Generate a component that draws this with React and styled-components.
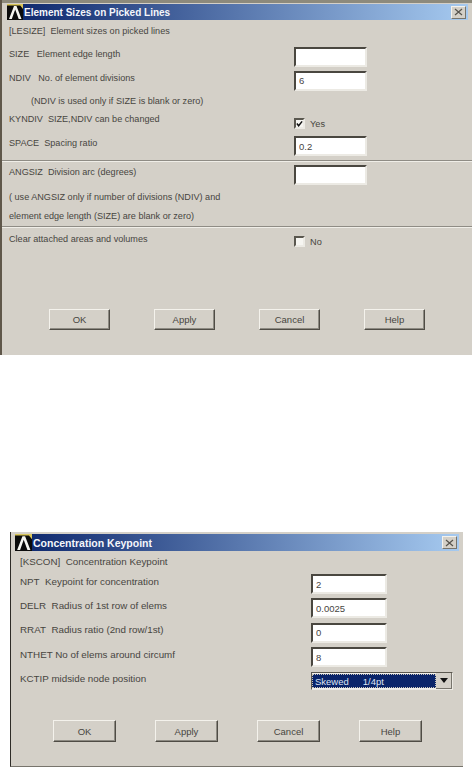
import React from "react";
import styled, { createGlobalStyle } from "styled-components";

const GlobalStyle = createGlobalStyle`
  html, body {
    margin: 0;
    padding: 0;
    background: #fff;
    width: 472px;
    height: 769px;
    overflow: hidden;
    font-family: "Liberation Sans", Arial, sans-serif;
  }
`;

const Page = styled.div`
  display: flex;
  flex-direction: column;
  width: 472px;
`;

const FirstDialog = styled.div`
  box-sizing: border-box;
  width: 472px;
  height: 355px;
  padding: 4px 4px 0 5px;
  background: #d4d0c8;
  border-left: 2px solid #5f574a;
  box-shadow: inset 0 3px 0 #8d8a7c;
`;

const SecondDialog = styled.div`
  box-sizing: border-box;
  width: 453px;
  height: 235px;
  margin: 177px 0 0 10px;
  padding: 2px 4px 0 4px;
  background: #d4d0c8;
  border-left: 1px solid #2e2c28;
  border-bottom: 1px solid #77746c;
`;

const TitleBar = styled.div`
  display: flex;
  align-items: center;
  height: ${(p) => p.$h}px;
  background: linear-gradient(90deg, #0a246a 0%, #a6caf0 100%);
  color: #f4f6fa;
  font-size: ${(p) => p.$size}px;
  font-weight: 700;
  padding-right: 2px;
`;

const TitleText = styled.span`
  flex: 1;
  margin-left: 1px;
  white-space: nowrap;
`;

const Close = styled.div`
  width: 15px;
  height: 13px;
  display: flex;
  align-items: center;
  justify-content: center;
  background: #d4d0c8;
  border: 1px solid;
  border-color: #f4f2ec #77746c #77746c #f4f2ec;
  box-sizing: border-box;
`;

const Row = styled.div`
  display: grid;
  grid-template-columns: ${(p) => p.$control}px 1fr;
  align-items: center;
  height: ${(p) => p.$h}px;
  color: #47453f;
  font-size: ${(p) => p.$size || 9.1}px;
  white-space: nowrap;
`;

const Label = styled.div`
  padding-left: ${(p) => p.$indent || 2}px;
  padding-bottom: ${(p) => p.$lift || 0}px;
`;

const Field = styled.input`
  box-sizing: border-box;
  display: block;
  width: ${(p) => p.$w}px;
  height: 20px;
  padding: 0 0 0 3px;
  margin: 0;
  outline: 0;
  background: #fff;
  border: 2px solid;
  border-color: #4a4740 #eceae4 #eceae4 #4a4740;
  color: #47453f;
  font: 9.5px "Liberation Sans", Arial, sans-serif;
`;

const CheckCell = styled.div`
  display: flex;
  align-items: center;
  gap: 5px;
  padding-top: 5px;
  font-size: 9.2px;
`;

const CheckBox = styled.div`
  box-sizing: border-box;
  width: 11px;
  height: 11px;
  display: flex;
  align-items: center;
  justify-content: center;
  background: #f6f5f1;
  border: 2px solid;
  border-color: #5a574f #eceae4 #eceae4 #5a574f;
`;

const Divider = styled.div`
  height: 1px;
  background: #8f8c85;
  border-bottom: 1px solid #f0eee8;
  margin: 0 -4px 0 -5px;
`;

const ButtonRow = styled.div`
  display: flex;
  gap: ${(p) => p.$gap}px;
  margin-top: ${(p) => p.$top}px;
  margin-left: ${(p) => p.$left}px;
`;

const Button = styled.button`
  box-sizing: border-box;
  width: ${(p) => p.$w}px;
  height: ${(p) => p.$h}px;
  padding: 0;
  background: #d4d0c8;
  border: 1px solid;
  border-color: #f4f2ec #4f4c45 #4f4c45 #f4f2ec;
  box-shadow: inset -1px -1px 0 #8d8a82;
  color: #47453f;
  font: 9.5px "Liberation Sans", Arial, sans-serif;
`;

const Select = styled.div`
  box-sizing: border-box;
  display: flex;
  width: 142px;
  height: 18px;
  background: #f2f0ec;
  border: 1px solid;
  border-color: #5a574f #eceae4 #eceae4 #5a574f;
`;

const SelectValue = styled.div`
  flex: 1;
  display: flex;
  align-items: center;
  gap: 14px;
  padding-left: 3px;
  margin: 1px 0;
  background: #0a246a;
  color: #dfe6f5;
  font-size: 9.5px;
  outline: 1px dotted #c9c5b8;
  outline-offset: -1px;
`;

const SelectArrow = styled.div`
  width: 15px;
  display: flex;
  align-items: center;
  justify-content: center;
  background: #d4d0c8;
  border-right: 1px solid #77746c;
  border-bottom: 1px solid #77746c;
`;

const AnsysLogo = ({ size }) => (
  <svg width={size} height={size} viewBox="0 0 16 16">
    <rect width="16" height="16" fill="#0b0b0b" />
    <path d="M0 0h16v1.5H0zM12 0h4v5z" fill="#d9c65a" />
    <path d="M2 15 L7 2 h2.5 L14.5 15 h-2.8 L8.2 5.5 L4.8 15z" fill="#f5f5f0" />
  </svg>
);

const CloseIcon = () => (
  <svg width="9" height="8" viewBox="0 0 9 8">
    <path d="M1 1l7 6M8 1L1 7" stroke="#55524c" strokeWidth="1.2" fill="none" />
  </svg>
);

const CheckMark = () => (
  <svg width="8" height="8" viewBox="0 0 8 8">
    <path d="M1 3.5l2 2.5 4-5" stroke="#111" strokeWidth="1.7" fill="none" />
  </svg>
);

const Title = ({ h, logo, size, children }) => (
  <TitleBar $h={h} $size={size}>
    <AnsysLogo size={logo} />
    <TitleText>{children}</TitleText>
    <Close>
      <CloseIcon />
    </Close>
  </TitleBar>
);

const Buttons = ({ w, h, gap, top, left }) => (
  <ButtonRow $gap={gap} $top={top} $left={left}>
    {["OK", "Apply", "Cancel", "Help"].map((name) => (
      <Button key={name} $w={w} $h={h}>
        {name}
      </Button>
    ))}
  </ButtonRow>
);

const FIRST_X = 287;
const SECOND_X = 296;
const SECOND_TEXT = 9.8;

const App = () => (
  <Page>
    <GlobalStyle />
    <FirstDialog>
      <Title h={16} logo={16} size={10}>Element Sizes on Picked Lines</Title>
      <Row $control={FIRST_X} $h={24}>
        <Label $lift={2}>[LESIZE]&nbsp; Element sizes on picked lines</Label>
      </Row>
      <Row $control={FIRST_X} $h={26}>
        <Label $lift={6}>SIZE&nbsp;&nbsp; Element edge length</Label>
        <Field $w={73} />
      </Row>
      <Row $control={FIRST_X} $h={21}>
        <Label $lift={6}>NDIV&nbsp;&nbsp; No. of element divisions</Label>
        <Field $w={73} defaultValue="6" />
      </Row>
      <Row $control={FIRST_X} $h={19}>
        <Label $indent={24}>(NDIV is used only if SIZE is blank or zero)</Label>
      </Row>
      <Row $control={FIRST_X} $h={22}>
        <Label $lift={4}>KYNDIV&nbsp; SIZE,NDIV can be changed</Label>
        <CheckCell>
          <CheckBox>
            <CheckMark />
          </CheckBox>
          Yes
        </CheckCell>
      </Row>
      <Row $control={FIRST_X} $h={28}>
        <Label $lift={6}>SPACE&nbsp; Spacing ratio</Label>
        <Field $w={73} defaultValue="0.2" />
      </Row>
      <Divider />
      <Row $control={FIRST_X} $h={26}>
        <Label $lift={6}>ANGSIZ&nbsp; Division arc (degrees)</Label>
        <Field $w={73} />
      </Row>
      <Row $control={FIRST_X} $h={17}>
        <Label>( use ANGSIZ only if number of divisions (NDIV) and</Label>
      </Row>
      <Row $control={FIRST_X} $h={21}>
        <Label>element edge length (SIZE) are blank or zero)</Label>
      </Row>
      <Divider />
      <Row $control={FIRST_X} $h={22}>
        <Label>Clear attached areas and volumes</Label>
        <CheckCell>
          <CheckBox />
          No
        </CheckCell>
      </Row>
      <Buttons w={61} h={21} gap={44} top={59} left={42} />
    </FirstDialog>
    <SecondDialog>
      <Title h={17} logo={17} size={10.5}>Concentration Keypoint</Title>
      <Row $control={SECOND_X} $h={21} $size={SECOND_TEXT}>
        <Label $indent={5}>[KSCON]&nbsp; Concentration Keypoint</Label>
      </Row>
      <Row $control={SECOND_X} $h={24} $size={SECOND_TEXT}>
        <Label $indent={5} $lift={6}>NPT&nbsp; Keypoint for concentration</Label>
        <Field $w={76} defaultValue="2" />
      </Row>
      <Row $control={SECOND_X} $h={24} $size={SECOND_TEXT}>
        <Label $indent={5} $lift={6}>DELR&nbsp; Radius of 1st row of elems</Label>
        <Field $w={76} defaultValue="0.0025" />
      </Row>
      <Row $control={SECOND_X} $h={25} $size={SECOND_TEXT}>
        <Label $indent={5} $lift={6}>RRAT&nbsp; Radius ratio (2nd row/1st)</Label>
        <Field $w={76} defaultValue="0" />
      </Row>
      <Row $control={SECOND_X} $h={24} $size={SECOND_TEXT}>
        <Label $indent={5} $lift={6}>NTHET No of elems around circumf</Label>
        <Field $w={76} defaultValue="8" />
      </Row>
      <Row $control={SECOND_X} $h={24} $size={SECOND_TEXT}>
        <Label $indent={5} $lift={6}>KCTIP midside node position</Label>
        <Select>
          <SelectValue>
            <span>Skewed</span>
            <span>1/4pt</span>
          </SelectValue>
          <SelectArrow>
            <svg width="8" height="5" viewBox="0 0 8 5">
              <path d="M0 0h8L4 5z" fill="#111" />
            </svg>
          </SelectArrow>
        </Select>
      </Row>
      <Buttons w={63} h={22} gap={39} top={27} left={38} />
    </SecondDialog>
  </Page>
);

export default App;
